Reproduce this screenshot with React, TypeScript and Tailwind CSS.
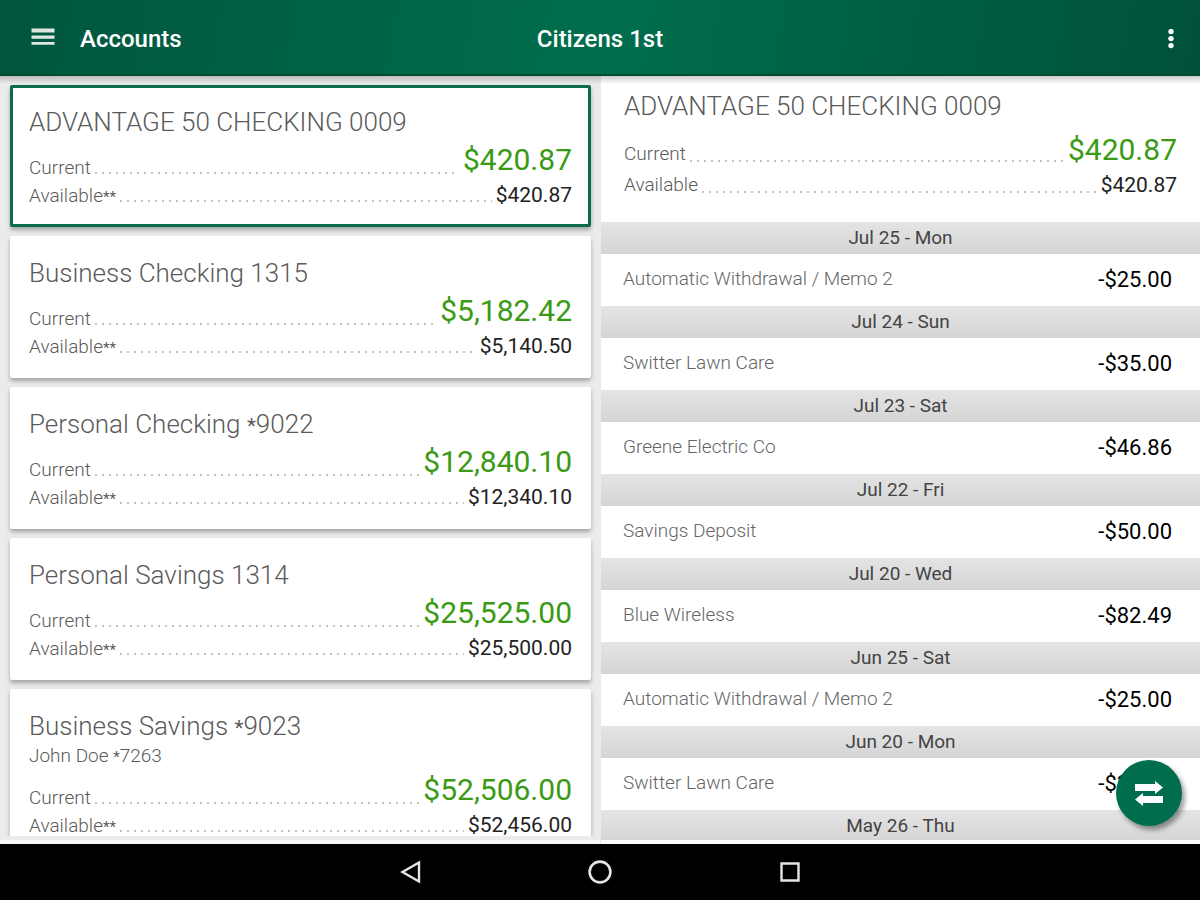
import { Fragment, useState } from "react";
import clsx from "clsx";

type Account = {
  name: string;
  owner?: string;
  current: string;
  available: string;
};

type Transaction = {
  date: string;
  title?: string;
  amount?: string;
};

const accounts: Account[] = [
  { name: "ADVANTAGE 50 CHECKING 0009", current: "$420.87", available: "$420.87" },
  { name: "Business Checking 1315", current: "$5,182.42", available: "$5,140.50" },
  { name: "Personal Checking *9022", current: "$12,840.10", available: "$12,340.10" },
  { name: "Personal Savings 1314", current: "$25,525.00", available: "$25,500.00" },
  {
    name: "Business Savings *9023",
    owner: "John Doe *7263",
    current: "$52,506.00",
    available: "$52,456.00",
  },
];

const transactions: Transaction[] = [
  { date: "Jul 25 - Mon", title: "Automatic Withdrawal / Memo 2", amount: "-$25.00" },
  { date: "Jul 24 - Sun", title: "Switter Lawn Care", amount: "-$35.00" },
  { date: "Jul 23 - Sat", title: "Greene Electric Co", amount: "-$46.86" },
  { date: "Jul 22 - Fri", title: "Savings Deposit", amount: "-$50.00" },
  { date: "Jul 20 - Wed", title: "Blue Wireless", amount: "-$82.49" },
  { date: "Jun 25 - Sat", title: "Automatic Withdrawal / Memo 2", amount: "-$25.00" },
  { date: "Jun 20 - Mon", title: "Switter Lawn Care", amount: "-$35.00" },
  { date: "May 26 - Thu" },
];

export default function App() {
  const [selected, setSelected] = useState(0);
  const account = accounts[selected];

  return (
    <div className="flex h-screen flex-col overflow-hidden bg-white font-[Roboto,sans-serif] text-[#5a5a5a]">
      <Header />

      <main className="relative grid min-h-0 flex-1 grid-cols-2">
        <section className="flex min-h-0 flex-col border-b-4 border-[#f8f8f8] bg-[#ebebeb] pb-1">
          <div className="flex min-h-0 flex-1 flex-col gap-[9px] overflow-y-auto pt-[9px] pr-[9px] pl-[10px] [scrollbar-width:none]">
            {accounts.map((item, index) => (
              <AccountCard
                key={item.name}
                account={item}
                active={index === selected}
                onClick={() => setSelected(index)}
              />
            ))}
          </div>
        </section>

        <section className="flex min-h-0 flex-col border-l border-[#ebebeb] pb-1">
          <div className="h-[146px] shrink-0 px-[23px] pt-[14px]">
            <h2 className="text-[26px] leading-8 font-light">
              <Masked text={account.name} />
            </h2>
            <div className="flex flex-col gap-[3px] pt-[10px]">
              <BalanceRow label="Current" value={account.current} large />
              <BalanceRow label="Available" value={account.available} />
            </div>
          </div>

          <table className="block min-h-0 flex-1 overflow-y-auto [scrollbar-width:none]">
            <tbody className="block">
              {transactions.map((item) => (
                <Fragment key={item.date}>
                  <tr className="flex h-8 items-center justify-center bg-linear-to-b from-[#e4e4e4] to-[#d5d5d5]">
                    <th className="text-[19px] leading-8 font-normal text-[#444]" scope="rowgroup">
                      {item.date}
                    </th>
                  </tr>
                  {item.title && (
                    <tr className="flex h-[52px] items-center justify-between bg-white pr-7 pb-px pl-[22px]">
                      <td className="text-[19px] font-light text-[#666]">{item.title}</td>
                      <td className="text-[22px] text-black">{item.amount}</td>
                    </tr>
                  )}
                </Fragment>
              ))}
            </tbody>
          </table>
        </section>

        <div className="pointer-events-none absolute inset-x-0 top-0 h-2 bg-linear-to-b from-black/20 to-transparent" />

        <button
          type="button"
          aria-label="Transfer"
          className="absolute right-[18px] bottom-[18px] flex size-[66px] items-center justify-center rounded-full bg-[#006e4e] text-white shadow-[3px_4px_5px_rgba(0,0,0,0.4)]"
        >
          <svg viewBox="0 0 28 25" className="h-[25px] w-7" fill="currentColor">
            <path d="M0 3h20V0l8 6.5-8 6.5v-3H0zM28 15H8v-3l-8 6.5L8 25v-3h20z" />
          </svg>
        </button>
      </main>

      <SystemBar />
    </div>
  );
}

function Header() {
  return (
    <header className="grid h-[76px] shrink-0 grid-cols-[1fr_auto_1fr] items-center border-b-2 border-[#004a33] bg-[linear-gradient(100deg,#00553e,#006e4d_50%,#00513a)] px-[15px] pt-1 text-[24px] font-medium text-white">
      <div className="flex items-center gap-[9px]">
        <button
          type="button"
          aria-label="Menu"
          className="flex size-14 items-center justify-center pb-1"
        >
          <svg viewBox="0 0 24 18" className="h-[18px] w-6" fill="#dfe8e0">
            <path d="M0.5 0.6h23v4H0.5zM0.5 7.4h23v3.4H0.5zM0.5 14h23v2.8H0.5z" />
          </svg>
        </button>
        <h1>Accounts</h1>
      </div>
      <span>Citizens 1st</span>
      <button
        type="button"
        aria-label="More options"
        className="flex h-14 w-7 items-center justify-center justify-self-end"
      >
        <svg viewBox="0 0 6 20" className="h-5 w-[6px]" fill="currentColor">
          <circle cx="3" cy="2.6" r="2.7" />
          <circle cx="3" cy="9.6" r="2.7" />
          <circle cx="3" cy="16.6" r="2.7" />
        </svg>
      </button>
    </header>
  );
}

function AccountCard({
  account,
  active,
  onClick,
}: {
  account: Account;
  active: boolean;
  onClick: () => void;
}) {
  return (
    <button
      type="button"
      onClick={onClick}
      className={clsx(
        "block w-full shrink-0 rounded-[2px] border-[3px] bg-white px-4 pt-[18px] pb-[14px] text-left shadow-[0_3px_4px_rgba(0,0,0,0.3)]",
        active ? "border-[#0b6b4d]" : "border-white"
      )}
    >
      <span className="block h-8 text-[26px] leading-8 font-light">
        <Masked text={account.name} />
      </span>
      {account.owner && (
        <span className="block h-[26px] text-[19px] leading-7 font-light">
          <Masked text={account.owner} />
        </span>
      )}
      <span className="flex flex-col pt-2">
        <BalanceRow label="Current" value={account.current} large compact />
        <BalanceRow label="Available**" value={account.available} compact />
      </span>
    </button>
  );
}

// label, dotted leader, amount
function BalanceRow({
  label,
  value,
  large,
  compact,
}: {
  label: string;
  value: string;
  large?: boolean;
  compact?: boolean;
}) {
  return (
    <span className={clsx("flex items-end", large ? "h-9" : "h-7")}>
      <span className="text-[19px] leading-7 font-light">
        <Masked text={label} />
      </span>
      <span
        className={clsx(
          "mx-1 h-[2px] flex-1 bg-[linear-gradient(90deg,#c4c4c4_2px,transparent_2px)] bg-[length:7px_2px]",
          compact ? "mb-2" : "mb-[6px]"
        )}
      />
      <span
        className={clsx(
          large ? "text-[30px] text-[#3a9a14]" : "text-[21px] text-[#222]",
          large && (compact ? "leading-[44px]" : "leading-9"),
          !large && (compact ? "leading-[30px]" : "leading-7")
        )}
      >
        {value}
      </span>
    </span>
  );
}

// the mask star is smaller and sits in the middle of the line
function Masked({ text }: { text: string }) {
  return text.split(/(\*)/).map((part, index) =>
    part === "*" ? (
      <span key={index} className="text-[80%] leading-none font-normal">
        *
      </span>
    ) : (
      <Fragment key={index}>{part}</Fragment>
    )
  );
}

function SystemBar() {
  return (
    <nav className="flex h-14 shrink-0 items-center justify-center gap-[150px] bg-black">
      <button type="button" aria-label="Back" className="flex size-10 items-center justify-center">
        <svg viewBox="0 0 24 24" className="size-6" fill="none" stroke="#e6e6e6" strokeWidth="2.4">
          <path d="M21 2.5v19L4.5 12z" />
        </svg>
      </button>
      <button type="button" aria-label="Home" className="flex size-10 items-center justify-center">
        <svg viewBox="0 0 24 24" className="size-6" fill="none" stroke="#e6e6e6" strokeWidth="2.6">
          <circle cx="12" cy="12" r="10.4" />
        </svg>
      </button>
      <button
        type="button"
        aria-label="Recent apps"
        className="flex size-10 items-center justify-center"
      >
        <svg viewBox="0 0 24 24" className="size-6" fill="none" stroke="#e6e6e6" strokeWidth="2.4">
          <path d="M3.5 3.5h17v17h-17z" />
        </svg>
      </button>
    </nav>
  );
}
